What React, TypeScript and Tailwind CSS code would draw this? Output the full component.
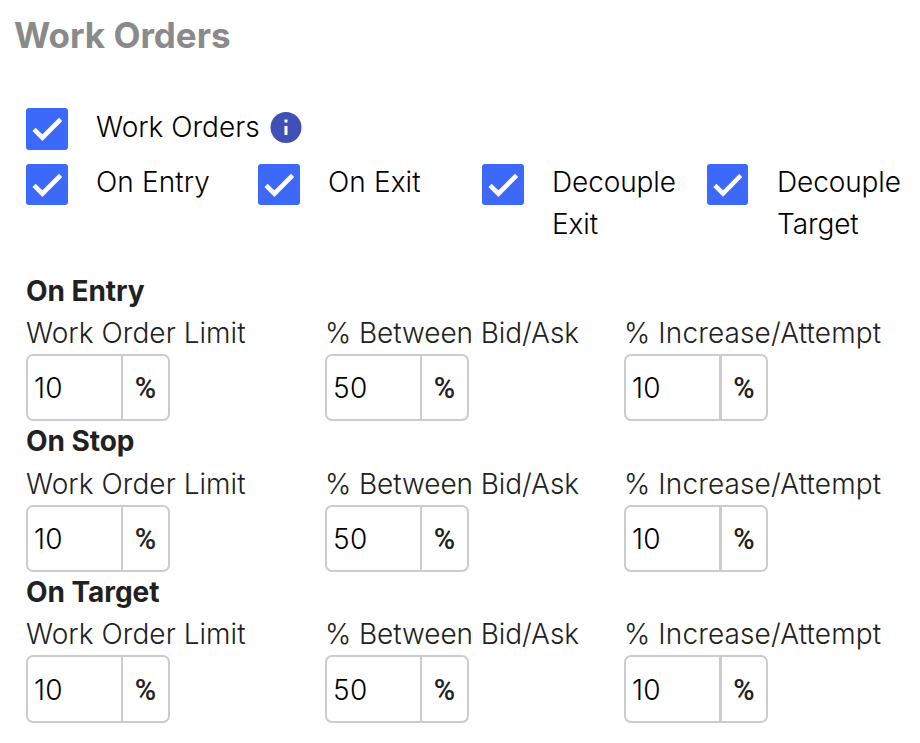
const Check = ({ size = "h-[41px] w-[42px]" }: { size?: string }) => (
  <span className={`flex shrink-0 items-start justify-start rounded-[3px] bg-[#3d69fa] ${size}`}>
    <svg width="42" height="41" viewBox="0 0 42 41" fill="none">
      <path d="M8.1 21.4 L16.4 29.7 L34.6 11.3" stroke="white" strokeWidth="4.6" />
    </svg>
  </span>
);

type FieldProps = {
  label: string;
  value: string;
  divider?: string;
  tracking?: string;
  box?: string;
};

const Field = ({
  label,
  value,
  divider = "border-r-2 w-[95px]",
  tracking = "tracking-[0.05px]",
  box = "h-[67px]",
}: FieldProps) => (
  <div className="w-[299px] shrink-0">
    <div className={`whitespace-nowrap text-[28px] font-[330] leading-[42px] text-[#212121] ${tracking}`}>{label}</div>
    <div className={`flex w-[144px] rounded-[7px] border-2 border-[#cccccc] text-[28px] ${box}`}>
      <div className={`flex items-center border-[#cccccc] pl-[6px] pt-px font-[350] tracking-[0.3px] text-black ${divider}`}>{value}</div>
      <div className="flex flex-1 items-center justify-center pt-[3px] font-[Roboto,sans-serif] text-[29px] font-medium text-[#212121]">%</div>
    </div>
  </div>
);

type SectionProps = { title: string; heading?: string; row?: string; box?: string };

const Section = ({ title, heading = "leading-[40px]", row = "", box }: SectionProps) => (
  <section className="h-[151px]">
    <h2 className={`h-[42px] text-[28px] font-bold tracking-[-0.05px] text-[#212121] ${heading}`}>{title}</h2>
    <div className={`flex ${row}`}>
      <Field label="Work Order Limit" value="10" box={box} />
      <Field label="% Between Bid/Ask" value="50" tracking="tracking-[-0.08px]" box={box} />
      <Field label="% Increase/Attempt" value="10" tracking="tracking-[0.12px]" divider="border-r-3 w-[96px]" box={box} />
    </div>
  </section>
);

export default function App() {
  return (
    <main className="h-[743px] w-[920px] overflow-hidden bg-white pl-[26px] font-['Inter',sans-serif] text-black">
      <h1 className="-ml-3 h-[108px] pt-2 text-[35px] font-bold leading-[54px] text-[#8a8a8a]">Work Orders</h1>
      <div className="flex h-14">
        <Check size="h-[42px] w-[42px]" />
        <span className="ml-7 w-[163px] whitespace-nowrap text-[28px] font-[350] leading-[38px]">Work Orders</span>
        <svg className="ml-[10.5px] mt-[3px]" width="32" height="32" viewBox="0 0 32 32">
          <circle cx="16" cy="16.5" r="15.5" fill="#3f51b5" />
          <path d="M14.5 8.5h3v3h-3z M14.5 15h3v9h-3z" fill="white" />
        </svg>
      </div>
      <div className="flex h-[106px] items-start text-[28px] font-[350] leading-[42px]">
        <div className="flex w-[232px] gap-7"><Check /><span className="-mt-[3px] tracking-[0.1px]">On Entry</span></div>
        <div className="flex w-[224px] gap-7"><Check /><span className="-mt-[3px] tracking-[0.1px]">On Exit</span></div>
        <div className="flex w-[225px] gap-7"><Check /><span className="-mt-[3px] tracking-[-0.1px]">Decouple<br />Exit</span></div>
        <div className="flex gap-[29px]"><Check size="h-[41px] w-[41px]" /><span className="-mt-[3px] tracking-[-0.1px]">Decouple<br />Target</span></div>
      </div>
      <Section title="On Entry" heading="leading-[42px]" />
      <Section title="On Stop" />
      <Section title="On Target" row="-mt-px" box="h-[68px]" />
    </main>
  );
}
